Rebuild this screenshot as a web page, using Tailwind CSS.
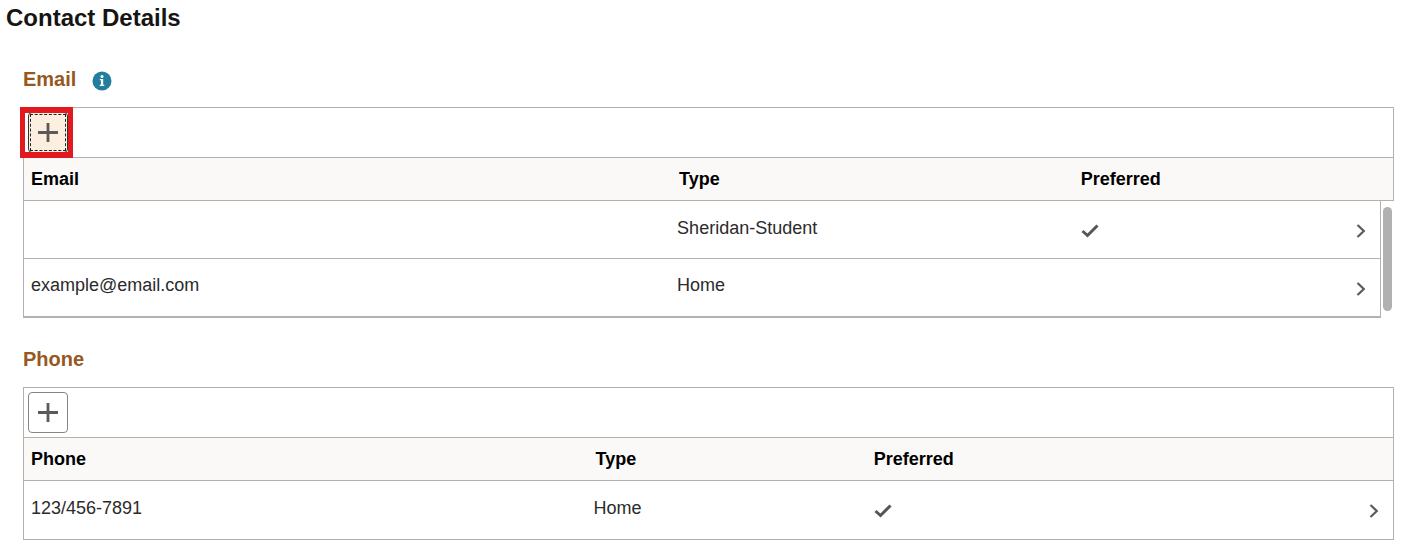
<!DOCTYPE html>
<html lang="en">
<head>
<meta charset="utf-8">
<meta name="viewport" content="width=device-width, initial-scale=1">
<title>Contact Details</title>
<script src="https://cdn.jsdelivr.net/npm/@tailwindcss/browser@4"></script>
</head>
<body class="bg-white font-['Liberation_Sans',Arial,sans-serif] text-lg leading-6 text-[#2b2b2b]">
<svg class="hidden" aria-hidden="true">
  <symbol id="plus" viewBox="0 0 20 20"><path d="M10 0V19M0 9.500H20" fill="none" stroke="#5a5a5a" stroke-width="2.800"/></symbol>
  <symbol id="check" viewBox="0 0 18 14"><path d="M1.500 7L6.500 11.500L16.500 1.500" fill="none" stroke="#565656" stroke-width="3"/></symbol>
  <symbol id="chevron" viewBox="0 0 10 14"><path d="M1.500 1L7.800 7L1.500 13" fill="none" stroke="#5a5a5a" stroke-width="2.200"/></symbol>
</svg>
<main class="pt-1">
  <h1 class="pl-1.5 text-2xl leading-7 font-bold text-[#161513]">Contact Details</h1>

  <section class="mt-8 ml-[23px] mr-[13px]" aria-labelledby="email-title">
    <div class="flex h-[43px] items-center gap-4 pb-[18px] pt-1">
      <h2 id="email-title" class="text-xl leading-6 font-bold text-[#97581f]">Email</h2>
      <button type="button" aria-label="Email information" class="mt-1">
        <svg class="size-5" viewBox="0 0 20 20"><circle cx="10" cy="10" r="9.500" fill="#227e9e"/><circle cx="10" cy="5.500" r="1.500" fill="#fff"/><path d="M7.800 8H11.200V13.800H12.300V15H7.700V13.800H8.900V9.300H7.800Z" fill="#fff"/></svg>
      </button>
    </div>
    <div class="relative h-[50px] border border-b-0 border-[#b4b1ad] pl-1 pt-1">
      <button type="button" aria-label="Add email" class="flex h-[41px] w-10 items-center justify-center rounded-sm border border-[#333] bg-[#fdefdf] p-px">
        <span class="flex size-full items-center justify-center border border-dashed border-[#222]"><svg class="size-5"><use href="#plus"/></svg></span>
      </button>
      <div class="pointer-events-none absolute -left-1 -top-px h-[51px] w-[53px] border-[5px] border-y-6 border-[#e2191f]"></div>
    </div>
    <table class="w-full table-fixed border-separate border-spacing-0 text-left">
      <colgroup><col class="w-[47.2%]"><col class="w-[29.3%]"><col><col class="w-10"><col class="w-[13px]"></colgroup>
      <thead>
        <tr class="h-[43px] bg-[#faf9f8] text-black">
          <th class="border-l border-t border-[#b4b1ad] py-0 pl-[7px]">Email</th>
          <th class="border-t border-[#b4b1ad] py-0 pl-[9px]">Type</th>
          <th class="border-t border-[#b4b1ad] py-0 pl-[9px]">Preferred</th>
          <th colspan="2" class="border-r border-t border-[#b4b1ad] py-0"></th>
        </tr>
      </thead>
      <tbody>
        <tr class="h-[58px]">
          <td class="border-l border-t border-[#b4b1ad] pb-1 pl-[7px]"></td>
          <td class="border-t border-[#b4b1ad] pb-1 pl-[7px]">Sheridan-Student</td>
          <td class="border-t border-[#b4b1ad] pl-[9px] pt-0.5"><svg role="img" aria-label="Preferred" class="h-3.5 w-[18px]"><use href="#check"/></svg></td>
          <td class="border-r border-t border-[#b4b1ad] pt-0.5"><button type="button" aria-label="Open Sheridan-Student email" class="ml-[15px] block"><svg class="h-3.5 w-2.5"><use href="#chevron"/></svg></button></td>
          <td rowspan="2" class="border-t border-[#b4b1ad] pl-0.5 align-top"><div class="mt-1.5 h-[104px] w-[9px] rounded-full bg-[#b1b1b1]"></div></td>
        </tr>
        <tr class="h-[60px]">
          <td class="border-b-2 border-l border-t border-[#b4b1ad] pb-1.5 pl-[7px]">example@email.com</td>
          <td class="border-b-2 border-t border-[#b4b1ad] pb-1.5 pl-[7px]">Home</td>
          <td class="border-b-2 border-t border-[#b4b1ad]"></td>
          <td class="border-b-2 border-r border-t border-[#b4b1ad] pt-0.5"><button type="button" aria-label="Open Home email" class="ml-[15px] block"><svg class="h-3.5 w-2.5"><use href="#chevron"/></svg></button></td>
        </tr>
      </tbody>
    </table>
  </section>

  <section class="mt-[26px] ml-[23px] mr-[13px]" aria-labelledby="phone-title">
    <div class="flex h-[43px] items-center pb-[18px] pt-1">
      <h2 id="phone-title" class="text-xl leading-6 font-bold text-[#97581f]">Phone</h2>
    </div>
    <div class="h-[50px] border border-b-0 border-[#b4b1ad] pl-1 pt-1">
      <button type="button" aria-label="Add phone" class="flex h-[41px] w-10 items-center justify-center rounded-sm border border-[#858585] bg-white">
        <svg class="size-5"><use href="#plus"/></svg>
      </button>
    </div>
    <table class="w-full table-fixed border-separate border-spacing-0 text-left">
      <colgroup><col class="w-[41.1%]"><col class="w-[20.3%]"><col><col class="w-10"></colgroup>
      <thead>
        <tr class="h-[43px] bg-[#faf9f8] text-black">
          <th class="border-l border-t border-[#b4b1ad] py-0 pl-[7px]">Phone</th>
          <th class="border-t border-[#b4b1ad] py-0 pl-[9px]">Type</th>
          <th class="border-t border-[#b4b1ad] py-0 pl-[9px]">Preferred</th>
          <th class="border-r border-t border-[#b4b1ad] py-0"></th>
        </tr>
      </thead>
      <tbody>
        <tr class="h-[60px]">
          <td class="border-y border-l border-[#b4b1ad] pb-1 pl-[7px]">123/456-7891</td>
          <td class="border-y border-[#b4b1ad] pb-1 pl-[7px]">Home</td>
          <td class="border-y border-[#b4b1ad] pl-[9px] pt-0.5"><svg role="img" aria-label="Preferred" class="h-3.5 w-[18px]"><use href="#check"/></svg></td>
          <td class="border-y border-r border-[#b4b1ad] pt-0.5"><button type="button" aria-label="Open Home phone" class="ml-[15px] block"><svg class="h-3.5 w-2.5"><use href="#chevron"/></svg></button></td>
        </tr>
      </tbody>
    </table>
  </section>
</main>
</body>
</html>
